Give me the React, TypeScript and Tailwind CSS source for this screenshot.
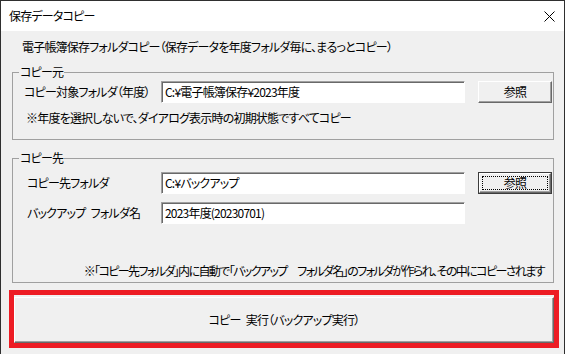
import React from "react";

const font = "font-['Noto_Sans_CJK_JP','Noto_Sans',sans-serif] [font-feature-settings:'palt'] text-[12px] leading-[16px] tracking-[-0.8px] text-black";

const RaisedButton: React.FC<{ label: string; focused?: boolean }> = ({ label, focused }) => {
  if (focused) {
    return (
      <div className="w-[74px] h-[22px] border border-[#3c3c3c] flex">
        <div className="flex-1 border border-t-white border-l-white border-b-[#696969] border-r-[#696969] shadow-[inset_-1px_-1px_#a0a0a0] bg-[#f0f0f0] p-[2px] flex">
          <div className="flex-1 border border-dotted border-black flex items-center justify-center">
            {label}
          </div>
        </div>
      </div>
    );
  }
  return (
    <div className="w-[74px] h-[22px] border border-t-white border-l-white border-b-[#696969] border-r-[#696969] shadow-[inset_-1px_-1px_#a0a0a0] bg-[#f0f0f0] flex items-center justify-center">
      {label}
    </div>
  );
};

const TextBox: React.FC<{ value: string }> = ({ value }) => (
  <div className="w-[304px] h-[22px] bg-white border border-t-[#a0a0a0] border-l-[#a0a0a0] border-b-white border-r-white shadow-[inset_1px_1px_#696969] flex items-center pl-[3px]">
    {value}
  </div>
);

const App: React.FC = () => {
  return (
    <div className={`w-[565px] h-[354px] overflow-hidden bg-[#f0f0f0] border-x border-t border-[#2f2f2f] flex flex-col ${font}`}>
      {/* title bar */}
      <div className="shrink-0 h-[30px] bg-white flex items-center justify-between pl-[8px] pr-[9px]">
        <span>保存データコピー</span>
        <svg width="11" height="11" viewBox="0 0 11 11">
          <path d="M0.5 0.5 L10.5 10.5 M10.5 0.5 L0.5 10.5" stroke="#000" strokeWidth="1" />
        </svg>
      </div>

      <div className="shrink-0 flex flex-col pl-[11px] pr-[10px]">
        <p className="mt-[8px] pl-[10px]">電子帳簿保存フォルダコピー（保存データを年度フォルダ毎に、まるっとコピー）</p>

        {/* コピー元 */}
        <fieldset className="mt-[9px] border border-[#a0a0a0]">
          <legend className="ml-[6px] px-[1px]">コピー元</legend>
          <div className="mt-[1px] flex items-center pl-[11px]">
            <span className="w-[137px]">コピー対象フォルダ（年度）</span>
            <TextBox value="C:¥電子帳簿保存¥2023年度" />
            <div className="ml-[13px]">
              <RaisedButton label="参照" />
            </div>
          </div>
          <p className="mt-[7px] pl-[13px] pb-[13px]">※年度を選択しないで、ダイアログ表示時の初期状態ですべてコピー</p>
        </fieldset>

        {/* コピー先 */}
        <fieldset className="mt-[10px] border border-[#a0a0a0]">
          <legend className="ml-[6px] px-[1px]">コピー先</legend>
          <div className="mt-[6px] flex items-center pl-[14px]">
            <span className="w-[134px]">コピー先フォルダ</span>
            <TextBox value="C:¥バックアップ" />
            <div className="ml-[13px]">
              <RaisedButton label="参照" focused />
            </div>
          </div>
          <div className="mt-[8px] flex items-center pl-[14px]">
            <span className="w-[134px]">バックアップ{"\u2002"}フォルダ名</span>
            <TextBox value="2023年度(20230701)" />
          </div>
          <p className="mt-[39px] pr-[9px] pb-[3px] text-right whitespace-nowrap tracking-[-1.6px]">
            ※「コピー先フォルダ」内に自動で「バックアップ{"\u2003"}フォルダ名」のフォルダが作られ、その中にコピーされます
          </p>
        </fieldset>

        {/* 実行ボタン */}
        <div className="mt-[7px] -ml-[3px] w-[550px] h-[58px] border-[5px] border-[#ed1c24] pt-[2px] flex">
          <div className="flex-1 border border-t-white border-l-white border-b-[#696969] border-r-[#696969] shadow-[inset_-1px_-1px_#a0a0a0] flex items-center justify-center">
            コピー{"\u2002"}実行（バックアップ実行）
          </div>
        </div>
      </div>
    </div>
  );
};

export default App;
